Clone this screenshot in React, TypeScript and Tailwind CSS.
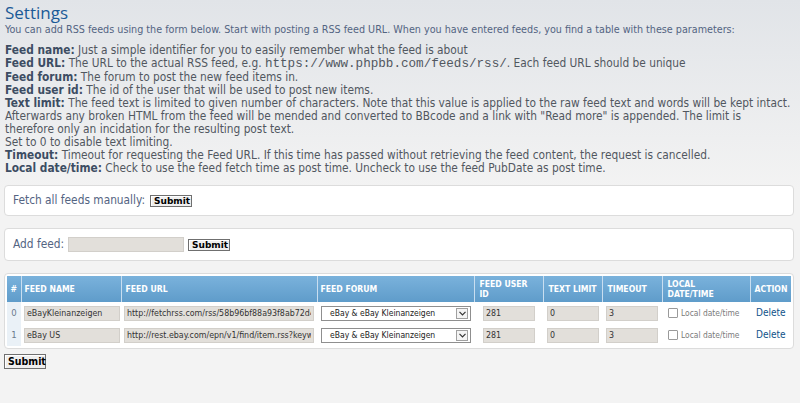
import React from "react";

const feeds = [
  { id: 0, name: "eBayKleinanzeigen", url: "http://fetchrss.com/rss/58b96bf88a93f8ab72d4c1e9", user: "281", limit: "0", timeout: "3" },
  { id: 1, name: "eBay US", url: "http://rest.ebay.com/epn/v1/find/item.rss?keyword=lego", user: "281", limit: "0", timeout: "3" },
];

function SubmitButton({ big = false }: { big?: boolean }) {
  return (
    <button
      className={`block border border-[#6f6f6f] bg-[#efefef] px-[3px] font-bold text-black shadow-[inset_1px_1px_0_#fff] ${
        big
          ? "h-[15px] w-[42px] font-['DejaVu_Sans_Condensed','DejaVu_Sans',sans-serif] text-[10.5px] leading-[13px]"
          : "h-[12px] w-[42px] font-['DejaVu_Sans',sans-serif] text-[9px] leading-[10px]"
      }`}
    >
      Submit
    </button>
  );
}

function Field({ value, width }: { value: string; width: string }) {
  return (
    <input
      readOnly
      value={value}
      className={`${width} block h-[15px] border border-[#d2cfca] bg-[#e2dfda] px-[2px] text-[8.8px] text-[#333] outline-none`}
    />
  );
}

function Cell({ pad, children }: { pad: string; children: React.ReactNode }) {
  return (
    <td className="p-0 align-middle">
      <div className={`flex h-[22px] items-center ${pad}`}>{children}</div>
    </td>
  );
}

export default function App() {
  return (
    <div className="min-h-[403px] w-[800px] bg-[linear-gradient(#e1e4e8,#f3f3f3_190px)] font-['DejaVu_Sans_Condensed','DejaVu_Sans',sans-serif] text-[#51575f]">
      <h1 className="pl-[5px] pt-[3px] font-['Open_Sans',sans-serif] text-[17px] leading-[20px] text-[#1a5a97]">Settings</h1>
      <p className="mt-[1px] whitespace-nowrap pl-[5px] text-[10.7px] leading-[12px] text-[#536482]">
        You can add RSS feeds using the form below. Start with posting a RSS feed URL. When you have entered feeds, you find a table with these parameters:
      </p>

      <div className="mt-[8px] whitespace-nowrap pl-[5px] text-[11.8px] leading-[13px] [&_b]:text-[#3d4d63]">
        <div><b>Feed name:</b> Just a simple identifier for you to easily remember what the feed is about</div>
        <div>
          <b>Feed URL:</b> The URL to the actual RSS feed, e.g.{" "}
          <span className="font-['Liberation_Mono',monospace] text-[12.6px] leading-[13px]">https://www.phpbb.com/feeds/rss/</span>. Each feed URL should be unique
        </div>
        <div><b>Feed forum:</b> The forum to post the new feed items in.</div>
        <div><b>Feed user id:</b> The id of the user that will be used to post new items.</div>
        <div>
          <b>Text limit:</b> The feed text is limited to given number of characters. Note that this value is applied to the raw feed text and words will be kept intact.
          <br />
          Afterwards any broken HTML from the feed will be mended and converted to BBcode and a link with "Read more" is appended. The limit is
          <br />
          therefore only an incidation for the resulting post text.
          <br />
          Set to 0 to disable text limiting.
        </div>
        <div><b>Timeout:</b> Timeout for requesting the Feed URL. If this time has passed without retrieving the feed content, the request is cancelled.</div>
        <div><b>Local date/time:</b> Check to use the feed fetch time as post time. Uncheck to use the feed PubDate as post time.</div>
      </div>

      <div className="pl-[4px] pr-[6px]">
        <div className="mt-[10px] flex h-[31px] items-center gap-[5px] rounded-[4px] border border-[#dcdcdc] bg-white pl-[8px] text-[11.8px] text-[#536482]">
          <span>Fetch all feeds manually:</span>
          <SubmitButton />
        </div>

        <div className="mt-[12px] flex h-[33px] items-center rounded-[4px] border border-[#dcdcdc] bg-white pl-[8px] text-[11.8px] text-[#536482]">
          <span>Add feed:</span>
          <input readOnly className="ml-[4px] block h-[15px] w-[116px] border border-[#d2cfca] bg-[#e2dfda] outline-none" />
          <span className="ml-[4px]">
            <SubmitButton />
          </span>
        </div>

        <div className="mt-[12px] rounded-[4px] border border-[#dcdcdc] bg-white p-[2px]">
          <table className="w-[784px] table-fixed border-collapse">
            <colgroup>
              <col className="w-[14px]" />
              <col className="w-[100px]" />
              <col className="w-[196px]" />
              <col className="w-[157px]" />
              <col className="w-[69px]" />
              <col className="w-[59px]" />
              <col className="w-[60px]" />
              <col className="w-[88px]" />
              <col className="w-[41px]" />
            </colgroup>
            <thead>
              <tr className="h-[26px] bg-[linear-gradient(#7ab2dc,#5f9cca)] text-left text-[8.6px] font-bold uppercase leading-[10px] text-white">
                <th className="border-r border-[#c9def0] p-0 text-center">#</th>
                <th className="border-r border-[#c9def0] p-0 pl-[3px]">Feed name</th>
                <th className="border-r border-[#c9def0] p-0 pl-[4px]">Feed URL</th>
                <th className="border-r border-[#c9def0] p-0 pl-[3px]">Feed forum</th>
                <th className="border-r border-[#c9def0] p-0 pl-[5px]">Feed user<br />id</th>
                <th className="border-r border-[#c9def0] p-0 pl-[5px]">Text limit</th>
                <th className="border-r border-[#c9def0] p-0 pl-[5px]">Timeout</th>
                <th className="border-r border-[#c9def0] p-0 pl-[5px]">Local<br />date/time</th>
                <th className="p-0 pl-[4px]">Action</th>
              </tr>
            </thead>
            <tbody className="leading-none">
              {feeds.map((f) => (
                <tr key={f.id}>
                  <td className="bg-[#eaf1f7] p-0 text-center align-middle text-[9.5px] text-[#6b7b8c]">{f.id}</td>
                  <Cell pad="pl-[3px]"><Field value={f.name} width="w-[96px]" /></Cell>
                  <Cell pad="pl-[3px]"><Field value={f.url} width="w-[190px]" /></Cell>
                  <Cell pad="pl-[4px]">
                    <div className="flex h-[15px] w-[150px] items-center justify-between border border-[#8f8f8f] bg-white pl-[8px] pr-[2px] text-[8.5px] text-[#222]">
                      <span>eBay &amp; eBay Kleinanzeigen</span>
                      <span className="flex h-[11px] w-[12px] items-center justify-center border border-[#a0a0a0] bg-[#f4f4f4]">
                        <svg width="7" height="5" viewBox="0 0 7 5" fill="none">
                          <path d="M0.5 0.8 L3.5 3.8 L6.5 0.8" stroke="#333" strokeWidth="1.2" />
                        </svg>
                      </span>
                    </div>
                  </Cell>
                  <Cell pad="pl-[9px]"><Field value={f.user} width="w-[52px]" /></Cell>
                  <Cell pad="pl-[4px]"><Field value={f.limit} width="w-[52px]" /></Cell>
                  <Cell pad="pl-[4px]"><Field value={f.timeout} width="w-[52px]" /></Cell>
                  <Cell pad="pl-[6px]">
                    <label className="flex items-center gap-[3px] text-[8.4px] text-[#7a7a7a]">
                      <span className="inline-block h-[10px] w-[10px] rounded-[1px] border border-[#9a9a9a] bg-white" />
                      Local date/time
                    </label>
                  </Cell>
                  <Cell pad="pl-[6px]">
                    <span className="text-[10px] text-[#105289]">Delete</span>
                  </Cell>
                </tr>
              ))}
            </tbody>
          </table>
        </div>

        <div className="mt-[5px] pt-[0px]">
          <SubmitButton big />
        </div>
      </div>
    </div>
  );
}
